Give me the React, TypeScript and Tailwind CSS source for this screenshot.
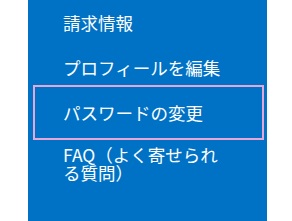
import React from 'react';

const items = [
    { label: '請求情報' },
    { label: 'プロフィールを編集' },
    { label: 'パスワードの変更', focused: true },
    { label: 'FAQ（よく寄せられる質問）' },
];

const App: React.FC = () => {
    return (
        <div className="w-[292px] h-[221px] bg-white flex" style={{ fontFamily: '"Noto Sans CJK JP", "Noto Sans", sans-serif' }}>
            <nav className="ml-[28px] w-[239px] h-full bg-[#0072c6]">
                <ul className="pl-[10px] pr-[8px]">
                    {items.map((item, i) => (
                        <li
                            key={i}
                            className={`text-white text-[17.5px] leading-[18px] pl-[25px] pr-[10px] ${i === 3 ? 'py-[11px]' : 'h-[45px] flex items-center'} ${item.focused ? 'outline-2 outline-[#e4a7d6] outline-offset-[3px]' : ''}`}
                        >
                            <span className="block max-w-[164px]">{item.label}</span>
                        </li>
                    ))}
                </ul>
            </nav>
        </div>
    );
};

export default App;
